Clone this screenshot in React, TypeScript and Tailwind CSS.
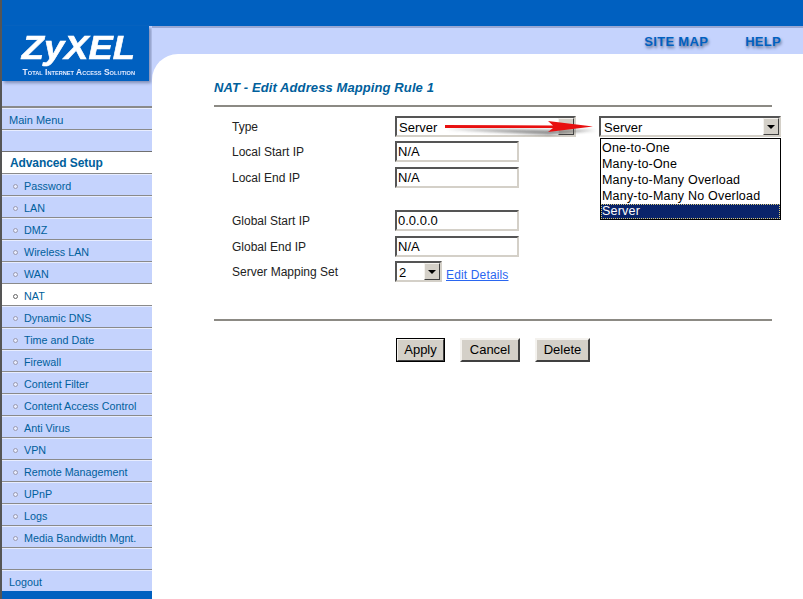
import React from 'react';

const menuItems = [
  'Password',
  'LAN',
  'DMZ',
  'Wireless LAN',
  'WAN',
  'NAT',
  'Dynamic DNS',
  'Time and Date',
  'Firewall',
  'Content Filter',
  'Content Access Control',
  'Anti Virus',
  'VPN',
  'Remote Management',
  'UPnP',
  'Logs',
  'Media Bandwidth Mgnt.',
];

const mappingOptions = ['One-to-One', 'Many-to-One', 'Many-to-Many Overload', 'Many-to-Many No Overload'];

const Caret = () => (
  <div className="flex h-[17px] w-[16px] items-center justify-center border border-t-[#f4f2ee] border-l-[#f4f2ee] border-b-[#404040] border-r-[#404040] bg-[#d4d0c8]">
    <div className="h-0 w-0 border-x-[4px] border-t-[4px] border-x-transparent border-t-black" />
  </div>
);

const FakeSelect = ({ value, className }: { value: string; className: string }) => (
  <div
    className={`flex items-center justify-between border-2 border-t-[#555] border-l-[#555] border-b-[#d4d0c8] border-r-[#d4d0c8] bg-white pr-[0px] text-[13px] leading-[15px] text-black ${className}`}
  >
    <span className="pt-[2px]">{value}</span>
    <Caret />
  </div>
);

const TextBox = ({ value }: { value: string }) => (
  <input
    readOnly
    value={value}
    className="h-[21px] w-[124px] border-2 border-t-[#555] border-l-[#555] border-b-[#d4d0c8] border-r-[#d4d0c8] bg-white px-[1px] text-[13px] text-black outline-none"
  />
);

const Row = ({ label, className, children }: { label: string; className?: string; children: React.ReactNode }) => (
  <div className={`flex items-center ${className ?? ''}`}>
    <div className="w-[163px] text-[12px] leading-[16px] text-[#222]">{label}</div>
    {children}
  </div>
);

const PushButton = ({ label, className }: { label: string; className: string }) => (
  <button
    className={`h-[24px] border-2 border-t-[#f4f2ee] border-l-[#f4f2ee] border-b-[#404040] border-r-[#404040] bg-[#d4d0c8] text-[13px] text-black ${className}`}
  >
    {label}
  </button>
);

export default function App() {
  return (
    <div className="flex h-[599px] w-[803px] overflow-hidden bg-white font-['Liberation_Sans',Arial,sans-serif]">
      <div className="w-[2px] shrink-0 bg-[#555]" />

      {/* left nav */}
      <div className="flex w-[150px] shrink-0 flex-col bg-[#c5d3fd]">
        <div className="h-[26px] bg-[#0060c0]" />
        <div className="flex h-[55px] w-[147px] flex-col items-center bg-[#0060c0] pl-[6px] shadow-[2px_2px_3px_#7f8db5]">
          <div className="mt-[5px] scale-x-[1.1] text-[33px] leading-[34px] font-bold text-white italic [-webkit-text-stroke:0.6px_white]">
            ZyXEL
          </div>
          <div className="mt-[2px] scale-x-[0.94] text-[9px] leading-[11px] font-bold whitespace-nowrap text-[#e4ebff] [font-variant:small-caps]">
            Total Internet Access Solution
          </div>
        </div>
        <div className="h-[25px]" />
        <div className="h-[2px] bg-[#8a8a8a]" />

        <div className="flex h-[22px] items-center border-t border-b border-t-[#e8edff] border-b-[#8a8a8a] pt-[2px] pl-[7px] text-[11px] text-[#00609c]">
          Main Menu
        </div>
        <div className="h-[22px] border-t border-b border-t-[#e8edff] border-b-[#707070]" />
        <div className="flex h-[22px] items-center border-b border-b-[#8a8a8a] bg-white pl-[8px] text-[12px] tracking-[-0.1px] font-bold text-[#00609c]">
          Advanced Setup
        </div>
        {menuItems.map(item => {
          const active = item === 'NAT';
          return (
            <div
              key={item}
              className={`flex h-[22px] items-center border-t border-b border-b-[#8a8a8a] pt-[2px] pl-[11px] text-[10.75px] text-[#00609c] ${active ? 'border-t-white bg-white' : 'border-t-[#e8edff]'}`}
            >
              <span
                className={`mr-[6px] h-[5px] w-[5px] rounded-full border ${active ? 'border-[#666]' : 'border-[#9a9ab0] bg-[#e8edff]'}`}
              />
              {item}
            </div>
          );
        })}
        <div className="h-[22px] border-t border-b border-t-[#e8edff] border-b-[#8a8a8a]" />
        <div className="flex h-[21px] items-center border-t border-t-[#e8edff] pt-[2px] pl-[7px] text-[10.75px] text-[#00609c]">
          Logout
        </div>
        <div className="flex-1 bg-[#0060c0]" />
      </div>

      {/* right side */}
      <div className="flex min-w-0 flex-1 flex-col bg-[#c5d3fd]">
        <div className="h-[26px] bg-[#0060c0]" />
        <div className="flex h-[28px] items-center justify-end border-t-2 border-t-[#9aa8d4] pt-[2px] pr-[22px] text-[13px] font-bold tracking-[0.3px] text-[#0060c0] [text-shadow:1px_2px_3px_#5a6a90]">
          <span>SITE MAP</span>
          <span className="ml-[37px]">HELP</span>
        </div>
        <div className="flex-1 rounded-tl-[26px] bg-white pt-[26px] pr-[31px] pl-[62px]">
          <h1 className="text-[13px] leading-[16px] font-bold tracking-[0.1px] text-[#00609c] italic">
            NAT - Edit Address Mapping Rule 1
          </h1>
          <div className="mt-[9px] h-[2px] bg-[#8c8a84]" />

          <div className="relative mt-[9px] pl-[18px]">
            <Row label="Type">
              <FakeSelect value="Server" className="h-[21px] w-[181px] pl-[2px]" />
            </Row>
            <Row label="Local Start IP" className="mt-[4px]">
              <TextBox value="N/A" />
            </Row>
            <Row label="Local End IP" className="mt-[5px]">
              <TextBox value="N/A" />
            </Row>
            <Row label="Global Start IP" className="mt-[22px]">
              <TextBox value="0.0.0.0" />
            </Row>
            <Row label="Global End IP" className="mt-[5px]">
              <TextBox value="N/A" />
            </Row>
            <Row label="Server Mapping Set" className="mt-[4px]">
              <FakeSelect value="2" className="h-[21px] w-[47px] pl-[2px]" />
              <a href="#" className="mt-[6px] ml-[4px] text-[12px] leading-[14px] tracking-[0.15px] text-[#2a66f0] underline">
                Edit Details
              </a>
            </Row>

            {/* pasted dropdown over the form */}
            <div className="absolute top-0 left-[385px] w-[182px]">
              <FakeSelect value="Server" className="h-[21px] w-[182px] pl-[3px]" />
              <div className="mt-[1px] ml-[1px] border border-black bg-white pt-[1px] text-[12.5px] leading-[16px] tracking-[0.2px] text-black">
                {mappingOptions.map(option => (
                  <div key={option} className="pl-[1px]">
                    {option}
                  </div>
                ))}
                <div className="border border-dotted border-[#d8c878] bg-[#0a246a] leading-[13px] text-white">
                  Server
                </div>
              </div>
            </div>

            {/* red annotation arrow */}
            <svg className="absolute top-[1px] left-[230px]" width="160" height="30" viewBox="0 0 160 30">
              <defs>
                <filter id="blur" x="-10%" y="-100%" width="120%" height="300%">
                  <feGaussianBlur stdDeviation="1.6" />
                </filter>
              </defs>
              <path d="M2 12 L105 13 L152 13 L105 18 Z" fill="#555" opacity="0.65" filter="url(#blur)" />
              <path d="M1 8 L109 8.5 L104 4 L149 9.5 L104 15 L109 11 L1 11 Z" fill="#e81010" />
            </svg>
          </div>

          <div className="mt-[37px] h-[2px] bg-[#8c8a84]" />

          <div className="mt-[17px] flex pl-[182px]">
            <PushButton label="Apply" className="w-[49px] outline outline-1 outline-black -outline-offset-1" />
            <PushButton label="Cancel" className="ml-[15px] w-[60px]" />
            <PushButton label="Delete" className="ml-[15px] w-[55px]" />
          </div>
        </div>
      </div>
    </div>
  );
}
